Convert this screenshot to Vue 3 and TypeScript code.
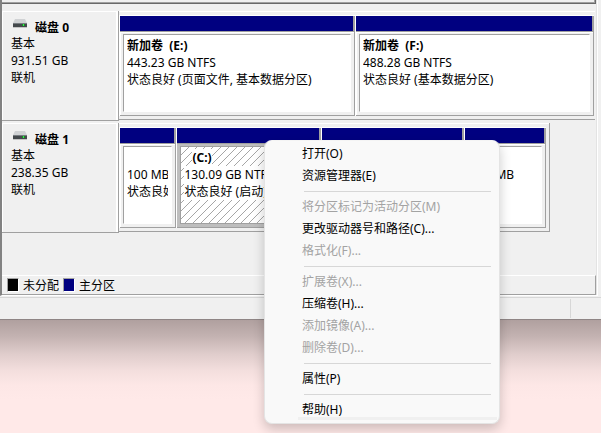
<script setup lang="ts">
interface Volume {
  name: string
  size: string
  status: string
  grow: number
  selected?: boolean
}
interface Disk {
  title: string
  size: string
  short: boolean
  volumes: Volume[]
}
interface MenuItem {
  label: string
  disabled?: boolean
}

const disks: Disk[] = [
  {
    title: '磁盘 0',
    size: '931.51 GB',
    short: false,
    volumes: [
      { name: '新加卷  (E:)', size: '443.23 GB NTFS', status: '状态良好 (页面文件, 基本数据分区)', grow: 236 },
      { name: '新加卷  (F:)', size: '488.28 GB NTFS', status: '状态良好 (基本数据分区)', grow: 239 },
    ],
  },
  {
    title: '磁盘 1',
    size: '238.35 GB',
    short: true,
    volumes: [
      { name: '', size: '100 MB', status: '状态良好', grow: 57 },
      { name: '(C:)', size: '130.09 GB NTFS', status: '状态良好 (启动)', grow: 145, selected: true },
      { name: '', size: '', status: '', grow: 143 },
      { name: '', size: '549 MB', status: '', grow: 82 },
    ],
  },
]

const groups: MenuItem[][] = [
  [{ label: '打开(O)' }, { label: '资源管理器(E)' }],
  [{ label: '将分区标记为活动分区(M)', disabled: true }, { label: '更改驱动器号和路径(C)...' }, { label: '格式化(F)...', disabled: true }],
  [
    { label: '扩展卷(X)...', disabled: true },
    { label: '压缩卷(H)...' },
    { label: '添加镜像(A)...', disabled: true },
    { label: '删除卷(D)...', disabled: true },
  ],
  [{ label: '属性(P)' }],
  [{ label: '帮助(H)' }],
]
</script>

<template>
  <div class="desktop">
    <main class="window">
      <div class="pane">
        <div class="upper"></div>
        <div class="disks">
          <section v-for="disk in disks" :key="disk.title" class="disk">
            <header class="label">
              <h2>
                <svg width="16" height="12" viewBox="0 0 16 12" aria-hidden="true">
                  <path d="M3 0h10l2 4H1z" fill="#d0d2d4" />
                  <path d="M1 4h14v4H1z" fill="#44494c" />
                  <path d="M1 4h14v1H1z" fill="#777c80" />
                  <path d="M1 8h14v1H1z" fill="#c4c4c4" />
                  <path d="M10 5h3v2h-3z" fill="#1f7a2c" />
                  <path d="M11 5h1v2h-1z" fill="#32f04a" />
                </svg>
                {{ disk.title }}
              </h2>
              <p>基本</p>
              <p>{{ disk.size }}</p>
              <p>联机</p>
            </header>
            <div class="volumes" :class="{ short: disk.short }">
              <article
                v-for="(volume, i) in disk.volumes"
                :key="i"
                class="volume"
                :class="{ selected: volume.selected }"
                :style="{ flexGrow: volume.grow }"
              >
                <div class="stripe"></div>
                <div class="frame">
                  <div class="box">
                    <p class="name"><span>{{ volume.name }}</span></p>
                    <p><span>{{ volume.size }}</span></p>
                    <p><span>{{ volume.status }}</span></p>
                  </div>
                </div>
              </article>
            </div>
          </section>
        </div>
        <footer class="legend">
          <span class="swatch"></span>未分配
          <span class="swatch primary"></span>主分区
        </footer>
      </div>
      <div class="status"><span></span><span></span></div>
    </main>
    <div class="shade"></div>

    <div class="menu" role="menu">
      <div v-for="(group, g) in groups" :key="g" class="group">
        <button v-for="item in group" :key="item.label" type="button" role="menuitem" :disabled="item.disabled">
          {{ item.label }}
        </button>
      </div>
      <div class="menu-end"></div>
    </div>
  </div>
</template>

<style>
body {
  background: #ffe9e8;
}
</style>

<style scoped>
* {
  box-sizing: border-box;
}
.desktop {
  position: relative;
  min-height: 100vh;
  overflow: hidden;
  background: #ffe9e8;
  color: #000;
  font: 12px/17px "Noto Sans", "Noto Sans CJK SC", sans-serif;
}
h2,
p {
  margin: 0;
  font-size: 12px;
  white-space: pre;
}
.window {
  background: #f0f0f0;
  border-bottom: 1px solid #8f8585;
}
.shade {
  height: 80px;
  background: linear-gradient(#b0a09f, #c3b2b1 20%, #e0cdcc 43%, #f4dfde 64%, #fde7e6 82%, #ffe9e8);
}
.pane {
  margin-right: 3px;
  border-left: 2px solid #828282;
  border-right: 1px solid #fff;
  border-bottom: 1px solid #fff;
  box-shadow: inset -1px 0 #e3e3e3;
}
.upper {
  height: 4px;
  margin-right: 1px;
  border-right: 1px solid #696969;
  border-bottom: 1px solid #696969;
  box-shadow: inset -1px -1px #a0a0a0;
}
.disks {
  height: 271px;
  padding-top: 7px;
  padding-right: 1px;
}
.disk {
  display: flex;
  height: 112px;
  align-items: flex-start;
}
.label {
  flex: 0 0 117px;
  height: 110px;
  padding: 8px 0 0 9px;
  border: solid #a0a0a0;
  border-width: 0 1px 1px 0;
  box-shadow: inset 1px 1px #fff, inset -2px 0 #fff;
}
.label h2 {
  display: flex;
  gap: 4px;
  height: 16px;
  padding-left: 1px;
}
.volumes {
  display: flex;
  flex: 1;
  height: 109px;
  margin-right: 1px;
  padding: 4px 1px 3px 0;
  border-bottom: 1px solid #a0a0a0;
  box-shadow: inset 0 1px #fff;
}
.volumes.short {
  margin-right: 46px;
  padding-right: 3px;
  border-right: 1px solid #a0a0a0;
}
.volume {
  display: flex;
  flex-direction: column;
  flex-basis: 0;
  min-width: 0;
  border-top: 1px solid #fff;
  border-left: 1px solid #fff;
}
.stripe {
  height: 16px;
  background: #000080;
  border-right: 2px solid #a0a0a0;
  border-bottom: 1px solid #a0a0a0;
}
.frame {
  flex: 1;
  min-height: 0;
  padding: 2px 3px 3px;
  border: solid #a0a0a0;
  border-width: 0 1px 1px 0;
  box-shadow: inset 1px 1px #fff;
}
.box {
  height: 100%;
  overflow: hidden;
  padding: 2px 3px 0;
  border: 1px solid #a0a0a0;
  border-right-color: #fff;
  border-bottom-color: #fff;
  background: #fff;
}
.box p {
  height: 17px;
  overflow: hidden;
}
.box span {
  display: inline-block;
}
.name {
  font-weight: 700;
}
.selected .frame {
  background: #bebebe;
  box-shadow: none;
}
.selected .box {
  border-color: #a0a0a0;
  background: #fff linear-gradient(135deg, transparent 46%, #a6a6a6 46% 54%, transparent 54%) 0 0 / 8px 8px;
}
.selected .box span {
  background: #fff;
}
.selected .name {
  padding-left: 8px;
}
.legend {
  display: flex;
  align-items: center;
  gap: 4px;
  height: 20px;
  margin-right: 1px;
  padding-left: 5px;
  border-top: 1px solid #fff;
  border-right: 1px solid #a0a0a0;
  border-bottom: 1px solid #a0a0a0;
}
.swatch {
  width: 12px;
  height: 14px;
  border: 1px solid #fff;
  border-top-color: #a0a0a0;
  border-left-color: #a0a0a0;
  background: #000;
}
.swatch.primary {
  background: #000080;
}
.status {
  display: flex;
  height: 22px;
  margin-top: 1px;
  padding: 1px 0;
  border-top: 1px solid #d7d7d7;
}
.status span:first-child {
  flex: 1;
  border-right: 1px solid #d7d7d7;
}
.status span:last-child {
  width: 30px;
}
.menu {
  position: absolute;
  top: 140px;
  left: 264px;
  width: 236px;
  padding: 1px 2px 3px;
  border: 1px solid #e4e4e4;
  border-top-color: #f4f4f4;
  border-radius: 8px;
  background: #f9f9f9;
  box-shadow: 0 5px 12px rgba(0, 0, 0, 0.2);
}
.group + .group::before {
  content: "";
  display: block;
  height: 1px;
  margin: 5px 6px 3px 37px;
  background: #d7d7d7;
}
.menu button {
  display: block;
  width: 100%;
  height: 22px;
  padding: 0 0 0 35px;
  border: 0;
  background: none;
  color: #000;
  font: inherit;
  text-align: left;
  white-space: nowrap;
}
.menu button:disabled {
  color: #a3a3a3;
}
.menu-end {
  height: 3px;
  margin-top: -3px;
  margin-left: 31px;
  background: #f0f0f0;
}
</style>
